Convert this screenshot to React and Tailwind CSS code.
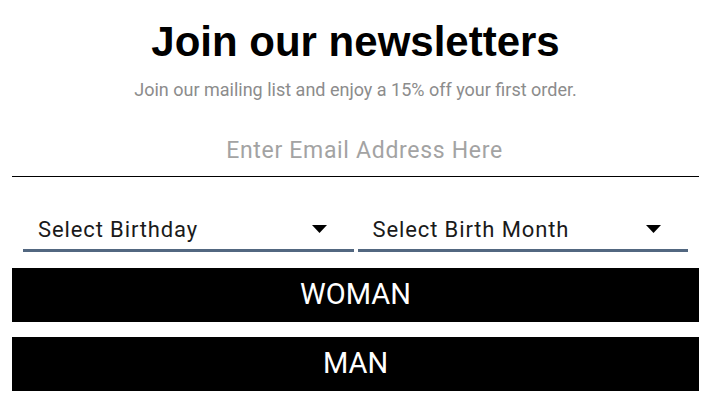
import React from 'react';

const DIN = { fontFamily: 'Roboto, "Noto Sans", sans-serif' };

function Caret() {
  return (
    <svg width="15" height="8" viewBox="0 0 15 8" className="shrink-0">
      <path d="M0 0 L15 0 L7.5 8 Z" fill="#000" />
    </svg>
  );
}

function SelectBox({ label }) {
  return (
    <div className="flex h-[46px] items-center justify-between border-b-[3px] border-[#526780] pl-[15px] pr-[27px] pt-[3px]">
      <span className="text-[22px] tracking-[0.04em] text-[#1a1a1a]">{label}</span>
      <Caret />
    </div>
  );
}

export default function App() {
  return (
    <div className="min-h-[417px] w-[723px] bg-white pl-3 pr-6 pt-[18px]" style={DIN}>
      {/* Heading */}
      <h2 className="text-center font-['Liberation_Sans',Arial,sans-serif] text-[42px] font-bold leading-[48px] text-black">
        Join our newsletters
      </h2>
      <p className="mt-3 text-center text-[18px] leading-6 text-[#8c8c8c]">
        Join our mailing list and enjoy a 15% off your first order.
      </p>

      {/* Email */}
      <div className="mt-[35px] border-b border-black pb-[11px] pl-[18px]">
        <input
          type="email"
          placeholder="Enter Email Address Here"
          className="w-full bg-transparent text-center text-[23px] leading-7 tracking-[0.03em] text-black outline-none placeholder:text-[#a3a3a3]"
        />
      </div>

      {/* Birthday selects */}
      <div className="mt-[29px] grid grid-cols-2 gap-1 px-[11px]">
        <SelectBox label="Select Birthday" />
        <SelectBox label="Select Birth Month" />
      </div>

      {/* Gender buttons */}
      <div className="mt-4 flex flex-col gap-[15px]">
        <button className="h-[54px] w-full bg-black text-[29px] text-white">WOMAN</button>
        <button className="h-[54px] w-full bg-black text-[29px] text-white">MAN</button>
      </div>
    </div>
  );
}
